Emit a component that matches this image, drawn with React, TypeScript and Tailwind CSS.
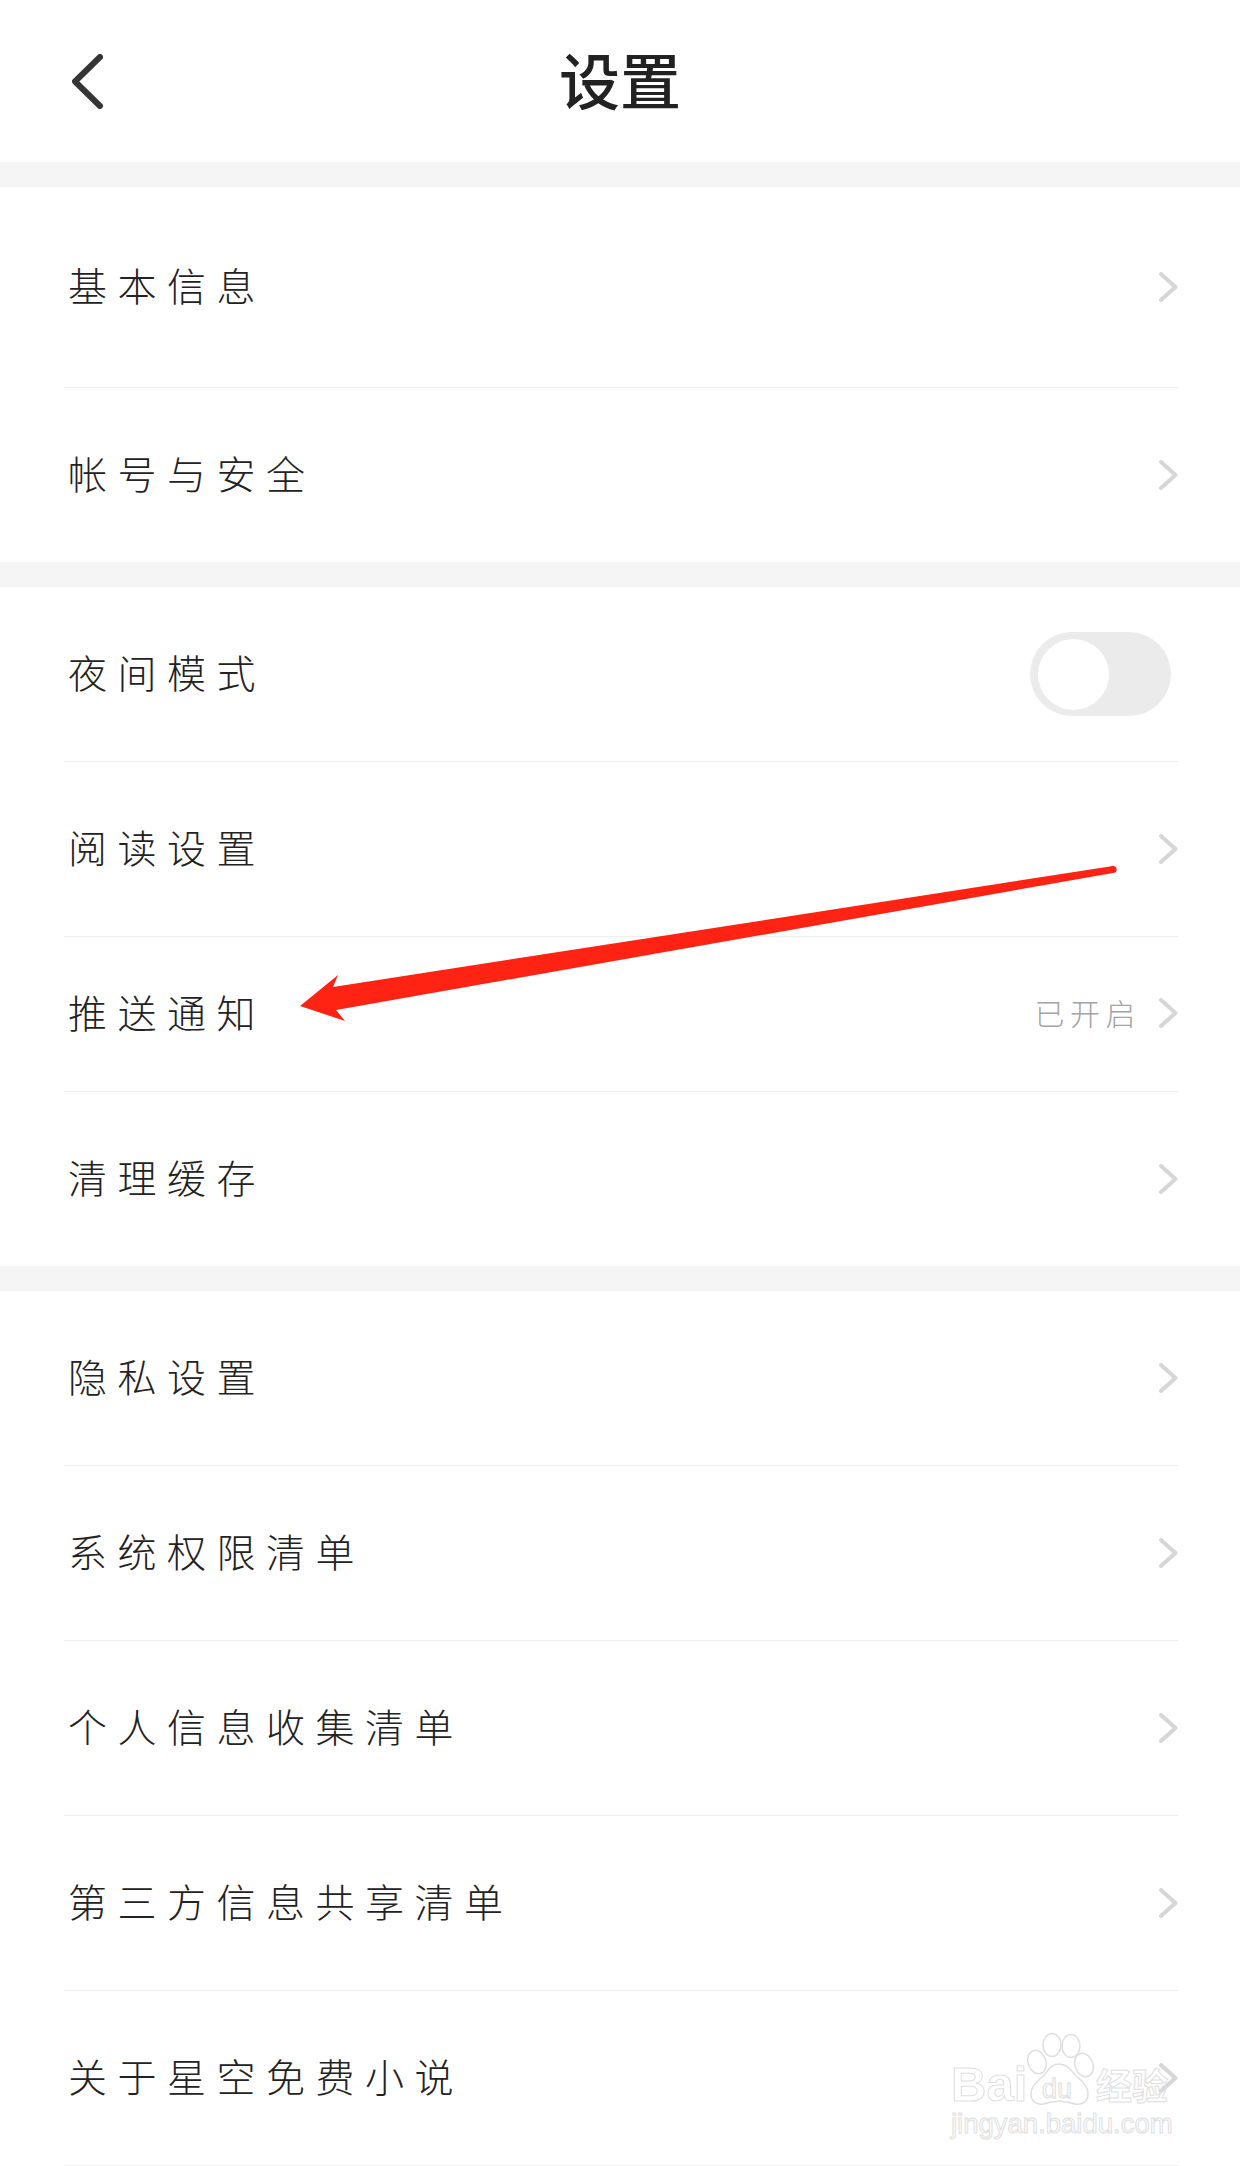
const cjk = "font-['Noto_Sans_CJK_SC','Noto_Sans',sans-serif]";

const Arrow = () => (
  <svg width="19" height="30" viewBox="0 0 19 30" fill="none" className="shrink-0">
    <polyline
      points="2,2 16.5,15 2,28"
      stroke="#d6d6d6"
      strokeWidth="4"
      strokeLinecap="round"
      strokeLinejoin="round"
    />
  </svg>
);

const Row = ({
  label,
  height,
  last,
  children,
}: {
  label: string;
  height: string;
  last?: boolean;
  children?: React.ReactNode;
}) => (
  <div
    className={`ml-[64px] mr-[62px] flex items-center justify-between ${height} ${
      last ? '' : 'border-b border-[#eeeeee]'
    }`}
  >
    <span className="pb-[6px] pl-[4px] text-[39px] font-light leading-none tracking-[10.5px] text-[#222222]">
      {label}
    </span>
    {children ?? <Arrow />}
  </div>
);

const Gap = () => <div className="h-[25px] bg-[#f5f5f5]" />;

export default function App() {
  return (
    <div className={`relative h-[2166px] w-full overflow-hidden bg-white ${cjk}`}>
      <header className="grid h-[162px] grid-cols-[1fr_auto_1fr] items-center">
        <svg width="31" height="55" viewBox="0 0 31 55" fill="none" className="ml-[72px]">
          <polyline
            points="28,3 3,27.5 28,52"
            stroke="#353535"
            strokeWidth="6"
            strokeLinecap="round"
            strokeLinejoin="round"
          />
        </svg>
        <h1 className="pb-[6px] text-[61px] font-medium leading-none text-[#222222]">设置</h1>
        <div />
      </header>

      <Gap />
      <Row label="基本信息" height="h-[201px]" />
      <Row label="帐号与安全" height="h-[174px]" last />

      <Gap />
      <Row label="夜间模式" height="h-[175px]">
        <div className="mr-[7px] flex h-[84px] w-[141px] items-center rounded-full bg-[#ebebeb] pl-[8px]">
          <div className="h-[71px] w-[71px] rounded-full bg-white" />
        </div>
      </Row>
      <Row label="阅读设置" height="h-[175px]" />
      <Row label="推送通知" height="h-[155px]">
        <div className="flex items-center pb-[2px]">
          <span className="mr-[18px] pb-[2px] text-[30px] font-light leading-none tracking-[5.5px] text-[#a3a3a3]">
            已开启
          </span>
          <Arrow />
        </div>
      </Row>
      <Row label="清理缓存" height="h-[174px]" last />

      <Gap />
      <Row label="隐私设置" height="h-[175px]" />
      <Row label="系统权限清单" height="h-[175px]" />
      <Row label="个人信息收集清单" height="h-[175px]" />
      <Row label="第三方信息共享清单" height="h-[175px]" />
      <Row label="关于星空免费小说" height="h-[175px]" />

      {/* annotation arrow over the list */}
      <svg
        className="pointer-events-none absolute left-0 top-0"
        width="1240"
        height="2166"
        viewBox="0 0 1240 2166"
      >
        <polygon
          points="300,1006 338,975 333,987 1113,866 1113,873 336,1010 345,1021"
          fill="#ff2314"
        />
        <circle cx="1113" cy="869.5" r="3.6" fill="#ff2314" />
      </svg>

      {/* watermark */}
      <div className="pointer-events-none absolute left-0 top-0 h-full w-full leading-none text-transparent [-webkit-text-stroke:1px_#dedede]">
        <svg className="absolute left-0 top-0" width="1240" height="2166" viewBox="0 0 1240 2166">
          <g fill="#ffffff" fillOpacity="0.6" stroke="#dedede" strokeWidth="1.5">
            <ellipse cx="1052" cy="2045" rx="9" ry="11.5" />
            <ellipse cx="1071" cy="2046" rx="9" ry="11.5" />
            <ellipse cx="1037" cy="2062" rx="9" ry="12" transform="rotate(-20 1037 2062)" />
            <ellipse cx="1084" cy="2065" rx="9" ry="12" transform="rotate(-20 1084 2065)" />
            <path d="M1059 2064c9 0 13 8 17 12 6 5 12 10 12 18 0 8-6 11-13 10-6-1-11-3-16-3s-10 2-16 3c-7 1-12-3-12-10 0-8 6-12 12-18 5-4 7-12 16-12z" />
          </g>
        </svg>
        <span className="absolute left-[951px] top-[2060px] font-['Liberation_Sans',sans-serif] text-[49px] font-bold">
          Bai
        </span>
        <span className="absolute left-[1042px] top-[2076px] font-['Liberation_Sans',sans-serif] text-[27px]">
          du
        </span>
        <span className="absolute left-[1096px] top-[2066px] text-[36px] font-bold">经验</span>
        <span className="absolute left-[951px] top-[2110px] font-['Liberation_Sans',sans-serif] text-[27.5px]">
          jingyan.baidu.com
        </span>
      </div>
    </div>
  );
}
